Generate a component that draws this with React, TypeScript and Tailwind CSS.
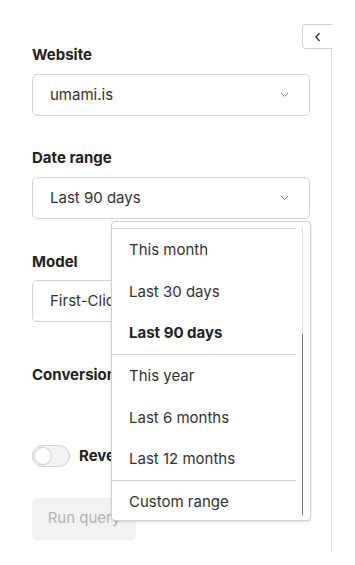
import React from "react";

const font = { fontFamily: "Inter, 'Noto Sans', sans-serif" };

function Chevron() {
  return (
    <svg width="9" height="6" viewBox="0 0 9 6" className="shrink-0">
      <path d="M1 1l3.5 3.5L8 1" fill="none" stroke="#8a8a8a" strokeWidth="1" />
    </svg>
  );
}

function Select({ value }: { value: string }) {
  return (
    <div className="h-[42px] w-[278px] border border-[#d4d4d4] rounded-[5px] flex items-center pl-[17px] pr-[20px] justify-between bg-white">
      <span className="text-[15px] text-[#333]">{value}</span>
      <Chevron />
    </div>
  );
}

function Label({ children }: { children: React.ReactNode }) {
  return <div className="text-[15px] leading-[20px] font-bold text-[#222]">{children}</div>;
}

const items: { t: string; bold?: boolean; sepAfter?: boolean }[] = [
  { t: "This month" },
  { t: "Last 30 days" },
  { t: "Last 90 days", bold: true, sepAfter: true },
  { t: "This year" },
  { t: "Last 6 months" },
  { t: "Last 12 months", sepAfter: true },
  { t: "Custom range" },
];

export default function App() {
  return (
    <div className="relative w-[355px] h-[565px] bg-white overflow-hidden" style={font}>
      <div className="ml-0 mt-[24px] w-[332px] h-[528px] border-r border-[#e2e2e2] pl-[32px] pt-[21px] flex flex-col">
        <Label>Website</Label>
        <div className="mt-[9px]"><Select value="umami.is" /></div>
        <div className="mt-[32px]"><Label>Date range</Label></div>
        <div className="mt-[9px]"><Select value="Last 90 days" /></div>
        <div className="mt-[33px]"><Label>Model</Label></div>
        <div className="mt-[8px]"><Select value="First-Click" /></div>
        <div className="mt-[43px]"><Label>Conversion step</Label></div>
        <div className="mt-[60px] flex items-center gap-[9px]">
          <div className="w-[38px] h-[22px] rounded-full border border-[#d0d0d0] bg-[#f3f3f3] flex items-center pl-[1px]">
            <div className="w-[18px] h-[18px] rounded-full bg-white border border-[#cfcfcf]" />
          </div>
          <span className="text-[15px] font-bold text-[#222]">Revenue</span>
        </div>
        <div className="mt-[30px] w-[104px] h-[42px] rounded-[5px] bg-[#f2f2f2] flex items-center justify-center text-[15px] text-[#b3b3b3]">
          Run query
        </div>
      </div>

      <div className="absolute left-[302px] top-[24px] w-[30px] h-[25px] border border-r-0 border-[#d4d4d4] rounded-l-[4px] bg-white flex items-center justify-center">
        <svg width="8" height="10" viewBox="0 0 8 10">
          <path d="M5.5 1L2 5l3.5 4" fill="none" stroke="#333" strokeWidth="1.3" />
        </svg>
      </div>

      <div className="absolute left-[111px] top-[221px] w-[200px] h-[300px] border border-[#d0d0d0] rounded-[4px] bg-white shadow-sm overflow-hidden flex">
        <div className="w-[184px] pt-[6px]">
          <div className="border-t border-[#d4d4d4]" />
          {items.map((it) => (
            <React.Fragment key={it.t}>
              <div
                className={
                  "flex items-center pl-[17px] text-[15px] " +
                  (it.sepAfter ? "h-[41px] " : "h-[42px] ") +
                  (it.bold ? "font-bold text-[#222]" : "text-[#333]")
                }
              >
                {it.t}
              </div>
              {it.sepAfter && <div className="border-t border-[#d4d4d4]" />}
            </React.Fragment>
          ))}
        </div>
        <div className="ml-[6px] pt-[6px] flex flex-col">
          <div className="w-[1px] h-[106px] bg-[#dcdcdc]" />
          <div className="w-[1px] h-[181px] bg-[#7a7a7a]" />
        </div>
      </div>
    </div>
  );
}
